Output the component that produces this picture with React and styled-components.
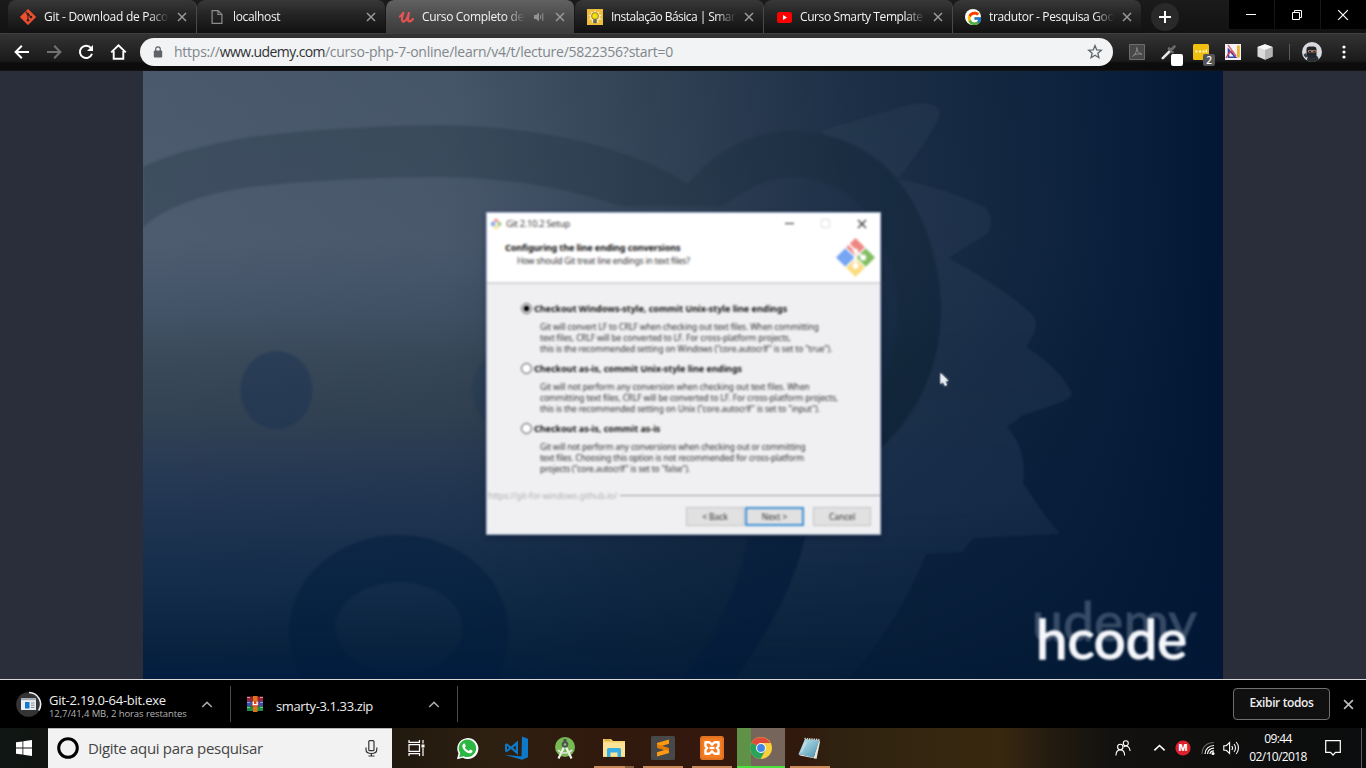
import React from 'react';
import styled, { createGlobalStyle, css } from 'styled-components';
import { FcGoogle } from 'react-icons/fc';

const GlobalStyle = createGlobalStyle`
  * { box-sizing: border-box; }
  html, body { margin: 0; padding: 0; background: #000; }
  body { overflow: hidden; font-family: "Open Sans", "Noto Sans", sans-serif; }
  svg { display: block; flex: none; }
`;

const Desktop = styled.div`
  width: 1366px;
  height: 768px;
  display: flex;
  flex-direction: column;
  overflow: hidden;
`;

/* ---------- tab strip ---------- */

const TabStrip = styled.header`
  height: 33px;
  display: flex;
  align-items: flex-start;
  padding-left: 8px;
  background: linear-gradient(#1b1b1b, #121212);
`;

const TabBox = styled.div`
  width: 189px;
  height: 33px;
  display: flex;
  align-items: center;
  padding: 1px 9px 0 12px;
  border-radius: 8px 8px 0 0;
  color: #f4f4f4;
  background: ${(p) =>
    p.$active
      ? 'linear-gradient(#616161, #4a4a4a 55%, #3b3b3b)'
      : 'linear-gradient(#383838, #242424 45%, #111)'};
  border-right: 1px solid ${(p) => (p.$divider ? '#4a4a4a' : 'transparent')};
  background-clip: padding-box;
`;

const TabIcon = styled.span`
  width: 16px;
  height: 16px;
  display: flex;
  align-items: center;
  justify-content: center;
`;

const TabTitle = styled.span`
  flex: 1;
  margin-left: 8px;
  overflow: hidden;
  white-space: nowrap;
  font-size: 12px;
  line-height: 18px;
  letter-spacing: ${(p) => p.$track || -0.34}px;
  -webkit-mask-image: linear-gradient(90deg, #000 calc(100% - 20px), transparent);
  mask-image: linear-gradient(90deg, #000 calc(100% - 20px), transparent);
`;

const TabClose = styled.span`
  width: 10px;
  margin-left: ${(p) => p.$gap || 8}px;
  color: #9a9a9a;
`;

const NewTab = styled.div`
  width: 28px;
  height: 28px;
  margin: 3px 0 0 9px;
  border-radius: 50%;
  background: #292929;
  display: flex;
  align-items: center;
  justify-content: center;
`;

const WindowControls = styled.div`
  margin-left: auto;
  display: flex;
  gap: 1px;
`;

const ControlButton = styled.div`
  width: 45px;
  height: 29px;
  padding-right: 1px;
  background: #000;
  display: flex;
  align-items: center;
  justify-content: center;
`;

/* ---------- toolbar ---------- */

const Toolbar = styled.nav`
  height: 38px;
  display: flex;
  align-items: center;
  padding: 0 14px 2px;
  border-top: 1px solid #3f3f3f;
  background: linear-gradient(#333, #1a1a1a 27px, #0c0c0c 29px, #0c0c0c 36px, #1b1b1b);
`;

const NavButtons = styled.div`
  display: flex;
  align-items: center;
  gap: 16px;
  width: 126px;
`;

const Omnibox = styled.div`
  width: 973px;
  height: 28px;
  border-radius: 14px;
  background: #f1f3f4;
  display: flex;
  align-items: center;
  padding: 0 10px 0 13px;
`;

const Url = styled.span`
  flex: 1;
  margin-left: 11px;
  white-space: nowrap;
  font-size: 14px;
  line-height: 20px;
  letter-spacing: -0.25px;
  color: #80868b;
`;

const UrlHost = styled.span`
  color: #303134;
  letter-spacing: -0.6px;
`;

const Extensions = styled.div`
  flex: 1;
  display: flex;
  align-items: center;
  gap: 16px;
  padding-left: 16px;
`;

const ExtensionSlot = styled.span`
  position: relative;
  width: 16px;
  height: 16px;
`;

const ExtensionBadge = styled.span`
  position: absolute;
  left: 10px;
  top: 10px;
  width: 12px;
  height: 12px;
  border-radius: 2px;
  background: ${(p) => p.$color};
  color: #fff;
  font: 600 10px/12px "Open Sans", sans-serif;
  text-align: center;
`;

const ToolbarDivider = styled.span`
  width: 1px;
  height: 16px;
  background: #5a5a5a;
`;

const ProfileArea = styled.span`
  display: flex;
  align-items: center;
  gap: 20px;
  margin-left: -4px;
`;

/* ---------- video page ---------- */

const Page = styled.main`
  height: 608px;
  display: flex;
  justify-content: center;
  background: #292e3a;
`;

const Video = styled.section`
  position: relative;
  width: 1080px;
  height: 608px;
  overflow: hidden;
  display: flex;
  justify-content: center;
  padding: 141px 0 0 1px;
  background:
    linear-gradient(90deg, rgba(2, 23, 52, 0) 0%, rgba(8, 28, 48, 0.06) 28%, rgba(8, 28, 48, 0.4) 48%, rgba(6, 27, 52, 0.68) 66%, rgba(3, 25, 53, 0.88) 88%, #011735 100%),
    linear-gradient(#4a596c, #4e5c70 28%, #435367 40%, #394959 48%, #334354 56%, #273a54 66%, #1d3350 75%, #122c4a 85%, #08223f 95%, #021d40);
`;

const VideoArt = styled.svg`
  position: absolute;
  inset: 0;
`;

const Wizard = styled.div`
  position: relative;
  width: 395px;
  height: 323px;
  display: flex;
  flex-direction: column;
  background: #f0eff1;
  border: 1px solid #aebbd6;
  color: #333;
  font-family: "Noto Sans", "Open Sans", sans-serif;
  filter: blur(0.8px);
  box-shadow: 0 2px 5px rgba(0, 10, 30, 0.4);
`;

const WizardTitleBar = styled.div`
  height: 21px;
  display: flex;
  align-items: center;
  padding: 0 13px 0 3px;
  background: #fff;
  font-size: 9.3px;
  letter-spacing: -0.3px;
  white-space: nowrap;
`;

const WizardTitle = styled.span`
  flex: 1;
  margin-left: 4px;
  color: #444;
`;

const WizardButtons = styled.span`
  display: flex;
  align-items: center;
  gap: 27px;
`;

const WizardHeader = styled.div`
  height: 50px;
  display: flex;
  justify-content: space-between;
  padding: 3px 4px 0 18px;
  background: #fff;
  border-bottom: 2px solid #d4d4d6;
  white-space: nowrap;
`;

const HeaderText = styled.div`
  padding-top: 4px;
`;

const HeaderTitle = styled.div`
  font-size: 9px;
  font-weight: 700;
  line-height: 13px;
  letter-spacing: -0.1px;
  color: #111;
`;

const HeaderSubtitle = styled.div`
  padding-left: 12px;
  font-size: 8.5px;
  line-height: 14px;
  letter-spacing: -0.2px;
`;

const OptionList = styled.div`
  flex: 1;
  padding: 17px 0 0 34px;
`;

const Option = styled.div`
  height: 60px;
`;

const OptionTitle = styled.div`
  height: 14px;
  display: flex;
  align-items: center;
  gap: 2px;
  font-size: 9px;
  font-weight: 700;
  letter-spacing: -0.01px;
  color: #111;
  white-space: nowrap;
`;

const Radio = styled.span`
  width: 11px;
  height: 11px;
  border-radius: 50%;
  border: 1px solid #444;
  background: ${(p) => (p.$on ? 'radial-gradient(#000 0 2.6px, #fff 3.4px)' : '#fff')};
`;

const OptionBody = styled.div`
  padding-top: 6px;
`;

const OptionLine = styled.div`
  padding-left: 19px;
  font-size: 8.4px;
  line-height: 11px;
  letter-spacing: ${(p) => p.$track}px;
  white-space: nowrap;
  color: #333;
`;

const WizardSite = styled.div`
  height: 12px;
  display: flex;
  align-items: center;
  gap: 3px;
  padding-left: 1px;
  font-size: 8.5px;
  letter-spacing: -0.12px;
  color: #b0b0b3;
  white-space: nowrap;
`;

const SiteRule = styled.span`
  flex: 1;
  height: 1px;
  background: #999;
`;

const WizardFooter = styled.div`
  height: 33px;
  display: flex;
  justify-content: flex-end;
  padding: 6px 9px 0 0;
`;

const WizardButton = styled.div`
  width: ${(p) => (p.$primary ? 59 : 58)}px;
  height: 19px;
  margin-left: ${(p) => p.$gap || 0}px;
  border: ${(p) => (p.$primary ? '2px solid #3f8fd3' : '1px solid #c3c3c5')};
  background: #e1e1e2;
  font-size: 8.6px;
  letter-spacing: -0.1px;
  line-height: ${(p) => (p.$primary ? 16 : 18)}px;
  text-align: center;
`;

/* ---------- downloads shelf ---------- */

const Shelf = styled.section`
  height: 49px;
  display: flex;
  align-items: center;
  background: #000;
  border-top: 1px solid #d8d8d8;
  color: #eee;
  white-space: nowrap;
`;

const DownloadItem = styled.div`
  width: ${(p) => p.$width}px;
  height: 36px;
  display: flex;
  align-items: center;
  padding: 0 17px 0 16px;
  border-right: 1px solid #4b4b4b;
`;

const DownloadText = styled.div`
  flex: 1;
  margin-left: ${(p) => p.$gap}px;
  padding-top: 4px;
`;

const DownloadName = styled.div`
  font-size: 13px;
  line-height: 15px;
  letter-spacing: ${(p) => p.$track}px;
`;

const DownloadStatus = styled.div`
  font-size: 9.5px;
  line-height: 12px;
  letter-spacing: -0.08px;
  color: #b4b4b4;
`;

const ShowAll = styled.div`
  margin-left: auto;
  width: 97px;
  height: 32px;
  border: 1px solid #6f6f6f;
  border-radius: 4px;
  background: #101010;
  font-size: 12px;
  font-weight: 600;
  line-height: 28px;
  letter-spacing: -0.38px;
  text-align: center;
`;

const ShelfClose = styled.div`
  width: 36px;
  display: flex;
  justify-content: center;
`;

/* ---------- taskbar ---------- */

const Taskbar = styled.footer`
  height: 40px;
  display: flex;
  background: linear-gradient(90deg, #0f1715 0, #11130f 48px, #21190f 392px, #2e2011 500px, #30190d 600px, #34180d 700px, #31190d 800px, #2f2310 840px, #38280f 1000px, #241b10 1050px, #12110f 1110px, #0b0c0d 1366px);
`;

const StartButton = styled.div`
  width: 48px;
  display: flex;
  align-items: center;
  justify-content: center;
`;

const SearchBox = styled.div`
  width: 344px;
  display: flex;
  align-items: center;
  padding: 0 14px 1px 8px;
  background: #f2f2f2;
  border-top: 1px solid #b5b5b5;
`;

const SearchHint = styled.span`
  flex: 1;
  margin-left: 8px;
  font-size: 15px;
  letter-spacing: -0.32px;
  color: #444;
  white-space: nowrap;
`;

const AppButton = styled.div`
  width: ${(p) => (p.$first ? 51 : 49)}px;
  display: flex;
  align-items: center;
  justify-content: center;
  padding-right: ${(p) => (p.$first ? 3 : 1)}px;
  ${(p) =>
    p.$running &&
    css`
      background: linear-gradient(#c98b57, #c98b57) 4px 38px / 40px 2px no-repeat;
    `}
  ${(p) =>
    p.$grouped &&
    css`
      background:
        linear-gradient(90deg, #c98b57 31px, #87603f 31px) 4px 38px / 40px 2px no-repeat;
    `}
  ${(p) =>
    p.$current &&
    css`
      background:
        linear-gradient(#4be23b, #4be23b) 0 38px / 48px 2px no-repeat,
        linear-gradient(90deg, #5f9147 14px, #75655a 14px) 0 0 / 48px 40px no-repeat;
    `}
`;

const Tray = styled.div`
  margin-left: auto;
  display: flex;
  align-items: center;
  color: #fff;
`;

const TrayIcon = styled.span`
  width: ${(p) => p.$width}px;
  padding-right: ${(p) => p.$inset || 0}px;
  display: flex;
  justify-content: center;
`;

const Clock = styled.div`
  width: 70px;
  font-size: 12px;
  line-height: 18px;
  text-align: center;
  letter-spacing: -0.62px;
`;

const DesktopEdge = styled.div`
  width: 5px;
  height: 40px;
  border-left: 1px solid #5e5e5e;
`;

/* ---------- icons ---------- */

const Cross = ({ size = 10, color = '#9a9a9a', width = 1.5 }) => (
  <svg width={size} height={size} viewBox="0 0 10 10" stroke={color} strokeWidth={width} fill="none">
    <path d="M1 1l8 8M9 1l-8 8" />
  </svg>
);

const GitIcon = () => (
  <svg width="16" height="16" viewBox="0 0 16 16">
    <path d="M8 .2L15.800 8 8 15.800.2 8z" fill="#f1502f" stroke="#f1502f" strokeWidth=".6" strokeLinejoin="round" />
    <path d="M5.600 2.600L8 5v6.200M8.200 5.400l2.700 2.700" stroke="#2a2220" strokeWidth="1.100" fill="none" />
    <circle cx="8" cy="5.300" r="1.300" fill="#2a2220" />
    <circle cx="8" cy="11.300" r="1.300" fill="#2a2220" />
    <circle cx="11" cy="8.100" r="1.300" fill="#2a2220" />
  </svg>
);

const FileIcon = () => (
  <svg width="12" height="14" viewBox="0 0 12 14" fill="none" stroke="#8c8c8c" strokeWidth="1.200">
    <path d="M1.100.600h6L10.900 4.400V13.400H1.100zM7 .8v3.700h3.800" />
  </svg>
);

const UdemyIcon = () => (
  <svg width="15" height="12" viewBox="0 0 15 12" fill="none" stroke="#ec5252" strokeLinecap="round">
    <path d="M.8 5.600C2.500 4.500 3.600 2.500 4.600 1.200 3.200 5 1.800 10.700 4.600 10.600 7.200 10.400 9 5.500 10.100 1.300 9 6 8.300 10.600 10.500 10.500 11.800 10.400 13 9.200 14 8" strokeWidth="2.100" />
  </svg>
);

const BulbIcon = () => (
  <svg width="16" height="16" viewBox="0 0 16 16">
    <path d="M0 0h16v16H0z" fill="#f0bd3a" />
    <path d="M8 .8l1.500 2.600 2.900-1.200-.6 3.100 3.200.8-2.500 2 2 2.500-3.200.2.300 3.200L8 12.500 4.800 14l.1-3.200-3.200-.4 2-2.400L1.200 6l3.200-.8-.8-3L6.500 3.400z" fill="#fbe9b0" />
    <circle cx="8" cy="7" r="3.400" fill="#f5df13" stroke="#7c6818" strokeWidth=".8" />
    <path d="M6.200 10.300h3.600v2.900l-1 1H7.200l-1-1z" fill="#66645c" />
  </svg>
);

const YoutubeIcon = () => (
  <svg width="15" height="11" viewBox="0 0 15 11">
    <rect width="15" height="11" rx="2.500" fill="#f00" />
    <path d="M6 3.100v4.800l4-2.400z" fill="#fff" />
  </svg>
);

const GoogleIcon = () => (
  <svg width="16" height="16" viewBox="0 0 16 16">
    <circle cx="8" cy="8" r="8" fill="#fff" />
    <FcGoogle x="1.500" y="1.500" width="13" height="13" />
  </svg>
);

const SpeakerSmall = () => (
  <svg width="10" height="10" viewBox="0 0 10 10">
    <path d="M0 3h2l3-2.500v9L2 7H0z" fill="#929292" />
    <path d="M6.700 3v4M8.800 1.200v7.600" stroke="#929292" fill="none" />
  </svg>
);

const ArrowIcon = ({ color = '#fff', flip }) => (
  <svg width="16" height="16" viewBox="0 0 16 16" fill="none" stroke={color} strokeWidth="2">
    <path d={flip ? 'M1 8h13M8.200 1.800L14.400 8l-6.200 6.200' : 'M15 8H2M7.800 1.800L1.600 8l6.200 6.200'} />
  </svg>
);

const ReloadIcon = () => (
  <svg width="16" height="16" viewBox="0 0 16 16">
    <path d="M13 4A6.200 6.200 0 1 0 14 9.800" fill="none" stroke="#fff" strokeWidth="2" />
    <path d="M15 1v6H9z" fill="#fff" />
  </svg>
);

const HomeIcon = () => (
  <svg width="17" height="16" viewBox="0 0 17 16" fill="none" stroke="#fff" strokeWidth="1.900">
    <path d="M1.200 8.400L8.500 1.300l7.300 7.100M3.700 7v7.800h9.600V7" />
  </svg>
);

const LockIcon = () => (
  <svg width="10" height="12" viewBox="0 0 10 12">
    <rect x=".8" y="4.500" width="8.400" height="7" rx="1" fill="#5f6368" />
    <path d="M2.700 5V3.200a2.300 2.300 0 0 1 4.600 0V5" fill="none" stroke="#5f6368" strokeWidth="1.200" />
  </svg>
);

const StarIcon = () => (
  <svg width="16" height="16" viewBox="0 0 16 16" fill="none" stroke="#5f6368" strokeWidth="1.300">
    <path d="M8 1.600l1.700 4.300 4.600.3-3.500 3 1.100 4.500L8 11.200l-3.900 2.500 1.100-4.500-3.500-3 4.600-.3z" />
  </svg>
);

const PdfIcon = () => (
  <svg width="16" height="16" viewBox="0 0 16 16" fill="none">
    <path d="M.5.500h15v15H.5z" fill="#484848" stroke="#6c6c6c" />
    <path d="M3.500 12.500c2.500-1.500 4.500-5 4.300-9M7.800 3.500c0 3 2 6.200 5 6.700M4 11.500c3-1.500 5.500-2 9-1.300" stroke="#8b8b8b" />
  </svg>
);

const PickerIcon = () => (
  <svg width="16" height="16" viewBox="0 0 16 16">
    <path d="M1.800 14.200L9 7" stroke="#e5e5e5" strokeWidth="2.600" strokeLinecap="round" />
    <path d="M8 4.500l3.500 3.500M10 6l3.500-3.500" stroke="#6a6a6a" strokeWidth="2.600" strokeLinecap="round" />
  </svg>
);

const DotsIcon = () => (
  <svg width="16" height="16" viewBox="0 0 16 16">
    <rect width="16" height="16" rx="1.500" fill="#f0c010" />
    <path d="M2.500 6.500h2v2h-2zM6 6.500h2v2H6zM9.500 6.500h2v2h-2zM12.600 5.500h1.400v3h-1.400z" fill="#fff7d3" />
  </svg>
);

const RulerIcon = () => (
  <svg width="16" height="16" viewBox="0 0 16 16">
    <path d="M0 0h16v16H0z" fill="#f5f2f7" />
    <path d="M3.500 5.500v7.700h7z" fill="none" stroke="#3846a6" strokeWidth="1.600" />
    <path d="M1 14l3-5c2-2 4-1.500 5 .5" fill="none" stroke="#d13b4b" strokeWidth="1.300" />
    <path d="M3 1l8 11" stroke="#d66070" strokeWidth="1.300" />
    <path d="M12 1.500h2.800v12H12z" fill="#eab42c" />
  </svg>
);

const CubeIcon = () => (
  <svg width="16" height="16" viewBox="0 0 16 16">
    <path d="M8 .3l7.500 2.700v9.600L8 15.800.5 12.600V3z" fill="#dadada" />
    <path d="M8 .3l7.500 2.700L8 6 .5 3z" fill="#f7f7f7" />
    <path d="M8 6l7.500-3v9.600L8 15.800z" fill="#b4b4b4" />
  </svg>
);

const NinjaIcon = () => (
  <svg width="20" height="20" viewBox="0 0 20 20">
    <circle cx="10" cy="10" r="10" fill="#d7d9dc" />
    <path d="M5 18.500c0-3 1-4.500 2-5h7c1.500.5 2.500 2 2.500 4A10 10 0 0 1 5 18.500z" fill="#2b3035" />
    <rect x="4.500" y="4.500" width="10" height="11" rx="3" fill="#20262c" />
    <path d="M6 8.200h8.500v2.200H6z" fill="#b98566" />
    <path d="M7 9h2v1H7zM11.500 9h2v1h-2z" fill="#222" />
    <path d="M1.500 13l2-2 2 3-1.500 2z" fill="#3a3f45" />
  </svg>
);

const KebabIcon = () => (
  <svg width="4" height="14" viewBox="0 0 4 14" fill="#fff">
    <circle cx="2" cy="2" r="1.600" />
    <circle cx="2" cy="7" r="1.600" />
    <circle cx="2" cy="12" r="1.600" />
  </svg>
);

const GitWindowsLogo = ({ size }) => (
  <svg width={size} height={size} viewBox="0 0 40 40">
    <path d="M20 1l9 9-9 9-9-9z" fill="#ee8783" />
    <path d="M10 11l9 9-9 9-9-9z" fill="#75a5f3" />
    <path d="M30 11l9 9-9 9-9-9z" fill="#82bd61" />
    <path d="M20 21l9 9-9 9-9-9z" fill="#fbdc80" />
    <path d="M12.500 6l7.500 7.500v14M20.500 14l7 6" stroke="#fff" strokeWidth="2" fill="none" />
    <circle cx="20" cy="28" r="3" fill="#fff" />
    <circle cx="27.500" cy="20" r="3" fill="#fff" />
    <circle cx="20" cy="13.500" r="2.400" fill="#fff" />
  </svg>
);

const InstallerIcon = () => (
  <svg width="26" height="26" viewBox="0 0 26 26">
    <circle cx="12.500" cy="13.500" r="12.300" fill="#343434" />
    <path d="M13 1.500a11.700 11.700 0 0 1 9.700 18" fill="none" stroke="#eee" strokeWidth="1.600" />
    <path d="M5 7h15v12H5z" fill="#e9edf0" />
    <path d="M5 7h15v2.200H5z" fill="#a5adb4" />
    <path d="M9 11h4.500v6.500H9z" fill="#1279cf" />
    <path d="M15 12h3.500M15 14.200h3.500M15 16.400h3.500" stroke="#878e94" strokeWidth="1" />
  </svg>
);

const ArchiveIcon = () => (
  <svg width="16" height="16" viewBox="0 0 16 16">
    <path d="M0 .5h16v4.700H0z" fill="#9a2436" />
    <path d="M0 5.300h16v4.900H0z" fill="#3c4fae" />
    <path d="M0 10.300h16V15H0z" fill="#1c8f45" />
    <path d="M0 1.500h3M0 6.300h3M0 11.300h3M13 1.500h3M13 6.300h3M13 11.300h3" stroke="#fff" strokeOpacity=".55" />
    <path d="M6 0h4.500v16H6z" fill="#e0721c" />
    <path d="M4.800 5.200h6.800v5.300H4.800z" fill="#cf4b24" />
    <path d="M6.300 5.500v3.200h3.800V5.500" fill="none" stroke="#fff" strokeWidth="1.300" />
  </svg>
);

const Caret = ({ size = 12, color = '#aaa' }) => (
  <svg width={size} height={size / 2 + 1} viewBox="0 0 12 7" fill="none" stroke={color} strokeWidth="1.500">
    <path d="M1.200 6L6 1.400 10.800 6" />
  </svg>
);

const WindowsIcon = () => (
  <svg width="16" height="16" viewBox="0 0 16 16" fill="#fff">
    <path d="M0 2.300l6.500-.9v6.200H0zM7.300 1.300L16 0v7.600H7.300zM0 8.400h6.500v6.200L0 13.700zM7.300 8.400H16V16l-8.700-1.300z" />
  </svg>
);

const CortanaIcon = () => (
  <svg width="24" height="24" viewBox="0 0 24 24">
    <circle cx="12" cy="12" r="9.300" fill="none" stroke="#000" strokeWidth="3" />
  </svg>
);

const MicIcon = () => (
  <svg width="13" height="17" viewBox="0 0 13 17" fill="none" stroke="#333" strokeWidth="1.200">
    <rect x="3.800" y=".7" width="5.200" height="10" rx="1" />
    <path d="M1 7.500v2c0 2.500 2 4 5.400 4s5.400-1.500 5.400-4v-2M6.400 13.500V16M3.500 16h6" />
  </svg>
);

const TaskViewIcon = () => (
  <svg width="17" height="16" viewBox="0 0 17 16" fill="none" stroke="#fff" strokeWidth="1.200">
    <path d="M1 4.600h10.500v6.800H1zM1 0v2.300h10.500V0M1 16v-2.300h10.500V16M15 0v3.500M15 8v8" />
    <path d="M13.500 4.500h3v3h-3z" fill="#fff" stroke="none" />
  </svg>
);

const WhatsappIcon = () => (
  <svg width="23" height="23" viewBox="0 0 24 24">
    <path d="M1 23.200l1.600-6A11 11 0 1 1 7 21.700z" fill="#fff" />
    <path d="M3.300 21l1.100-4.100A9.100 9.100 0 1 1 8 20z" fill="#2cb742" />
    <path d="M8.300 6.800c.4 0 .8-.1 1.100.7l.8 1.900c.1.500-.9 1.200-.9 1.600.8 1.800 2.300 2.900 3.900 3.500.5 0 1.200-1.500 1.700-1.400l2.200 1.100c.5.600-.2 2.500-1.800 2.800-3.500.6-8.400-3.600-8.700-7.300 0-1.200.8-2.800 1.700-2.900z" fill="#fff" />
  </svg>
);

const CodeIcon = () => (
  <svg width="24" height="24" viewBox="0 0 24 24" fill="#0f79c9">
    <path d="M18 .5l6 2.200v18.500L18 23.700.3 18.700 17.500 20.500z" />
    <path d="M14 4.500v14.500L7 13l-4.300 3.300L1 15.200V8.300l1.700-1L7 10.500zm-2.200 5L9 11.800l2.800 2.500zM3 9.800v3.900L5.100 11.800z" fillRule="evenodd" />
  </svg>
);

const StudioIcon = () => (
  <svg width="22" height="24" viewBox="0 0 22 24">
    <circle cx="11" cy="11" r="10" fill="#79b955" />
    <path d="M10.500 10L4.500 22.500M11.500 10l6 12.500" fill="none" stroke="#eef2ea" strokeWidth="2.200" />
    <path d="M4 14c3.500 4 10.500 4 14 0" fill="none" stroke="#dfe8d9" strokeWidth="1.600" />
    <path d="M9.500 3h3v4h-3z" fill="#49554d" />
    <circle cx="11" cy="8.500" r="3.300" fill="#49554d" />
    <circle cx="11" cy="8.500" r="1.300" fill="#8fbe77" />
  </svg>
);

const FolderIcon = () => (
  <svg width="22" height="20" viewBox="0 0 22 20">
    <path d="M0 1h8l2 2h12v16H0z" fill="#f7d36b" />
    <path d="M0 4.500h22V18H0z" fill="#fde396" />
    <path d="M1.500 1.500h6v1.200h-6z" fill="#c89c36" />
    <path d="M4 11.500q0-1.500 1.500-1.500h11q1.500 0 1.500 1.500V19h-3.500v-4.500h-7V19H4z" fill="#37aee4" />
  </svg>
);

const SublimeIcon = () => (
  <svg width="24" height="24" viewBox="0 0 24 24">
    <rect width="24" height="24" rx="1.500" fill="#484848" />
    <path d="M6 7l12-3.500v4.200L10.500 10 18 12.300V17L6 20.500v-4.200l7.500-2.200L6 11.800z" fill="#ff9a10" />
    <path d="M6 11.800V7.900L18 12.300V15z" fill="#e57c05" />
  </svg>
);

const XamppIcon = () => (
  <svg width="24" height="24" viewBox="0 0 24 24">
    <rect width="24" height="24" rx="3" fill="#f47b20" />
    <rect x="1" y="1" width="22" height="22" rx="2.500" fill="none" stroke="#cf6c28" />
    <path
      d="M5.500 6.300h3.300c1.500 0 1.800 1 3.200 2.500 1.400-1.500 1.700-2.500 3.200-2.500h3.300v3.900L16.800 12l1.700 1.800v3.900h-3.300c-1.500 0-1.800-1-3.200-2.500-1.400 1.500-1.700 2.500-3.200 2.500H5.500v-3.900L7.200 12l-1.700-1.800z"
      fill="none"
      stroke="#fff"
      strokeWidth="2.400"
      strokeLinejoin="round"
    />
    <path d="M9.500 12h5" stroke="#fff" strokeWidth="2.400" />
  </svg>
);

const ChromeIcon = () => (
  <svg width="22" height="22" viewBox="0 0 22 22">
    <circle cx="11" cy="11" r="11" fill="#f9cf3c" />
    <path d="M11 11L1.500 5.500A11 11 0 0 0 10.500 22L15.300 13.500z" fill="#28a35a" />
    <path d="M11 11L1.500 5.500A11 11 0 0 1 20.500 6H11z" fill="#df4a3b" />
    <circle cx="11" cy="11" r="5" fill="#f6f6f6" />
    <circle cx="11" cy="11" r="3.900" fill="#4285e8" />
  </svg>
);

const NotepadIcon = () => (
  <svg width="24" height="24" viewBox="0 0 24 24">
    <defs>
      <linearGradient id="sheet" x1="0" y1="0" x2="1" y2="1">
        <stop offset="0" stopColor="#c8ebf2" />
        <stop offset="1" stopColor="#438fae" />
      </linearGradient>
    </defs>
    <path d="M21 4l1 2-3.500 17-3-1z" fill="#e8e6de" />
    <path d="M7 3l14.500 1L15.500 21.500 .5 18z" fill="url(#sheet)" />
    <path d="M.5 18l15 3.500 2 1L2 19.500z" fill="#f1f4f4" />
    <path d="M6.500 2.500l15 1.200" stroke="#d7d3c8" strokeWidth="1.600" strokeDasharray="1.300 1" />
    <path d="M8 6L3 16.500" stroke="#fff" strokeOpacity=".3" strokeWidth="2" />
  </svg>
);

const PeopleIcon = () => (
  <svg width="16" height="16" viewBox="0 0 16 16" fill="none" stroke="#fff" strokeWidth="1.100">
    <circle cx="5.300" cy="7" r="2.700" />
    <path d="M1 15.500c0-7.500 8.600-7.500 8.600 0" />
    <circle cx="10.800" cy="3.200" r="2.500" />
    <path d="M8.800 6.800c2.500-2 6 0 6.300 4.200" />
  </svg>
);

const MegaIcon = () => (
  <svg width="16" height="16" viewBox="0 0 16 16">
    <circle cx="8" cy="8" r="7.600" fill="#df1f2d" />
    <text x="8" y="11.400" textAnchor="middle" fontFamily="Inter, sans-serif" fontWeight="800" fontSize="9.500" fill="#fff">M</text>
  </svg>
);

const WifiIcon = () => (
  <svg width="14" height="14" viewBox="0 0 14 14" fill="none" strokeWidth="1.200">
    <path d="M1 13C1 6 6 1.500 13 1.500" stroke="#666" />
    <path d="M4 13c0-5 4-8.500 9-8.500M6.500 13c0-3.500 3-5.800 6.500-5.800M9 13c0-2 2-3.200 4-3.200" stroke="#fff" />
    <circle cx="12" cy="12.500" r="1.500" fill="#fff" />
  </svg>
);

const VolumeIcon = () => (
  <svg width="17" height="14" viewBox="0 0 17 14" fill="none" stroke="#fff" strokeWidth="1.100">
    <path d="M.8 4.700h2.500L6.600 1.500v11L3.300 9.300H.8zM8.800 5c1 1.200 1 2.800 0 4M11 3c2 2.200 2 5.800 0 8M13.200 1c3 3.300 3 8.700 0 12" />
  </svg>
);

const NotificationIcon = () => (
  <svg width="16" height="16" viewBox="0 0 16 16" fill="none" stroke="#fff" strokeWidth="1.200">
    <path d="M.7.700h14.600v11.600H10.500L8 15l-2.500-2.700H.7z" />
  </svg>
);

/* ---------- video artwork ---------- */

const Wallpaper = () => (
  <VideoArt width="1080" height="608" viewBox="143 71 1080 608">
    <defs>
      <filter id="soft" colorInterpolationFilters="sRGB"><feGaussianBlur stdDeviation="0.9" /></filter>
      <linearGradient id="fadeDown" gradientUnits="userSpaceOnUse" x1="0" y1="71" x2="0" y2="679">
        <stop offset="0" stopColor="#3d4f62" stopOpacity=".22" />
        <stop offset=".7" stopColor="#34496a" stopOpacity=".28" />
        <stop offset="1" stopColor="#2c4a68" stopOpacity="0.05" />
      </linearGradient>
    </defs>
    <g filter="url(#soft)">
      <path
        fill="url(#fadeDown)"
        d="M823 130L909 105Q936 99 940 113Q938 128 898 179Q945 188 985 207Q996 220 987 234L948 258Q1000 285 1034 316Q1040 328 1026 347Q1060 368 1072 394Q1072 401 1023 415L1007 427Q1027 448 1023 483Q1040 510 1060 534L973 538L962 552L926 554Q895 630 848 679H735Q790 600 805 538L881 448Q944 385 941 304Q935 230 898 179Q870 145 823 134z"
      />
      <g fill="#122434" fillOpacity=".24">
        <path d="M143 167Q180 149 250 137Q340 126 445 125Q600 129 688 184Q730 132 792 131Q860 133 905 190Q941 240 941 304Q940 400 881 448V394Q900 340 898 304Q896 270 884 246Q860 178 791 177Q755 180 723 206H620Q540 178 440 177Q340 177 250 187Q175 198 143 227z" />
        <ellipse cx="276.500" cy="390" rx="36" ry="39" fill="#152c52" fillOpacity=".4" />
        <ellipse cx="508" cy="390" rx="36" ry="39" fill="#152c52" />
        <path fill="#001b3c" fillOpacity=".45" fillRule="evenodd" d="M289 632a109.500 97 0 1 1 219 0a109.500 97 0 1 1-219 0zM335 628a64 46 0 1 0 128 0a64 46 0 1 0-128 0z" />
        <path d="M748 538Q735 610 684 679H735Q790 605 805 538z" fill="#001b3c" fillOpacity=".35" />
      </g>
    </g>
    <g filter="url(#soft)" fontFamily="Lato, sans-serif">
      <text x="1032" y="641" fontSize="54" textLength="165" lengthAdjust="spacingAndGlyphs" fill="#62748c" stroke="#62748c" strokeWidth="1" opacity=".55">udemy</text>
      <text x="1036" y="659" fontSize="54" textLength="151" lengthAdjust="spacingAndGlyphs" fill="#f5f7fb" stroke="#f5f7fb" strokeWidth="1.400">hcode</text>
    </g>
    <path d="M940.500 373v11l2.500-2 2 4 2-1-1.800-3.800 3.300-.3z" fill="#fff" stroke="#777f8c" strokeWidth=".5" filter="url(#soft)" />
    <path d="M940.500 373v11l2.500-2 2 4 2-1-1.800-3.800 3.300-.3z" fill="#e8ecf2" fillOpacity=".8" />
  </VideoArt>
);

/* ---------- content ---------- */

const tabs = [
  { title: 'Git - Download de Paco', icon: <GitIcon />, divider: true, track: -0.28 },
  { title: 'localhost', icon: <FileIcon /> },
  { title: 'Curso Completo de', icon: <UdemyIcon />, active: true, audio: true },
  { title: 'Instalação Básica | Smar', icon: <BulbIcon />, divider: true, track: -0.55 },
  { title: 'Curso Smarty Template', icon: <YoutubeIcon />, divider: true, track: -0.4 },
  { title: 'tradutor - Pesquisa Goo', icon: <GoogleIcon /> },
];

const options = [
  {
    title: 'Checkout Windows-style, commit Unix-style line endings',
    on: true,
    track: -0.12,
    lines: [
      'Git will convert LF to CRLF when checking out text files. When committing',
      'text files, CRLF will be converted to LF. For cross-platform projects,',
      'this is the recommended setting on Windows ("core.autocrlf" is set to "true").',
    ],
  },
  {
    title: 'Checkout as-is, commit Unix-style line endings',
    track: -0.11,
    lines: [
      'Git will not perform any conversion when checking out text files. When',
      'committing text files, CRLF will be converted to LF. For cross-platform projects,',
      'this is the recommended setting on Unix ("core.autocrlf" is set to "input").',
    ],
  },
  {
    title: 'Checkout as-is, commit as-is',
    track: -0.17,
    lines: [
      'Git will not perform any conversions when checking out or committing',
      'text files. Choosing this option is not recommended for cross-platform',
      'projects ("core.autocrlf" is set to "false").',
    ],
  },
];

const SetupWizard = () => (
  <Wizard>
    <WizardTitleBar>
      <GitWindowsLogo size={12} />
      <WizardTitle>Git 2.10.2 Setup</WizardTitle>
      <WizardButtons>
        <svg width="9" height="9" viewBox="0 0 9 9"><path d="M0 4.500h9" stroke="#444" strokeWidth="1.200" /></svg>
        <svg width="9" height="9" viewBox="0 0 9 9"><path d="M.5.500h8v8h-8z" stroke="#ddd" fill="none" /></svg>
        <Cross size={10} color="#333" width={1.2} />
      </WizardButtons>
    </WizardTitleBar>
    <WizardHeader>
      <HeaderText>
        <HeaderTitle>Configuring the line ending conversions</HeaderTitle>
        <HeaderSubtitle>How should Git treat line endings in text files?</HeaderSubtitle>
      </HeaderText>
      <GitWindowsLogo size={41} />
    </WizardHeader>
    <OptionList>
      {options.map((o) => (
        <Option key={o.title}>
          <OptionTitle>
            <Radio $on={o.on} />
            {o.title}
          </OptionTitle>
          <OptionBody>
            {o.lines.map((line) => (
              <OptionLine key={line} $track={o.track}>{line}</OptionLine>
            ))}
          </OptionBody>
        </Option>
      ))}
    </OptionList>
    <WizardSite>
      https://git-for-windows.github.io/
      <SiteRule />
    </WizardSite>
    <WizardFooter>
      <WizardButton>&lt; Back</WizardButton>
      <WizardButton $primary $gap={1}>Next &gt;</WizardButton>
      <WizardButton $gap={9}>Cancel</WizardButton>
    </WizardFooter>
  </Wizard>
);

const Tab = ({ title, icon, active, audio, divider, track }) => (
  <TabBox $active={active} $divider={divider}>
    <TabIcon>{icon}</TabIcon>
    <TabTitle $track={track}>{title}</TabTitle>
    {audio && <TabClose $gap={9}><SpeakerSmall /></TabClose>}
    <TabClose $gap={audio ? 11 : 8}><Cross /></TabClose>
  </TabBox>
);

export default function App() {
  return (
    <Desktop>
      <GlobalStyle />
      <TabStrip>
        {tabs.map((t) => <Tab key={t.title} {...t} />)}
        <NewTab>
          <svg width="12" height="12" viewBox="0 0 12 12"><path d="M6 0v12M0 6h12" stroke="#fff" strokeWidth="2" /></svg>
        </NewTab>
        <WindowControls>
          <ControlButton>
            <svg width="10" height="10" viewBox="0 0 10 10"><path d="M0 4.500h10" stroke="#fff" /></svg>
          </ControlButton>
          <ControlButton>
            <svg width="10" height="10" viewBox="0 0 10 10" fill="none" stroke="#fff"><path d="M.5 2.500h7v7h-7zM2.500 2.500v-2h7v7h-2" /></svg>
          </ControlButton>
          <ControlButton><Cross color="#fff" width={1} size={12} /></ControlButton>
        </WindowControls>
      </TabStrip>

      <Toolbar>
        <NavButtons>
          <ArrowIcon />
          <ArrowIcon flip color="#727272" />
          <ReloadIcon />
          <HomeIcon />
        </NavButtons>
        <Omnibox>
          <LockIcon />
          <Url>
            https://<UrlHost>www.udemy.com</UrlHost>/curso-php-7-online/learn/v4/t/lecture/5822356?start=0
          </Url>
          <StarIcon />
        </Omnibox>
        <Extensions>
          <ExtensionSlot><PdfIcon /></ExtensionSlot>
          <ExtensionSlot><PickerIcon /><ExtensionBadge $color="#fff" /></ExtensionSlot>
          <ExtensionSlot><DotsIcon /><ExtensionBadge $color="#555">2</ExtensionBadge></ExtensionSlot>
          <ExtensionSlot><RulerIcon /></ExtensionSlot>
          <ExtensionSlot><CubeIcon /></ExtensionSlot>
          <ToolbarDivider />
          <ProfileArea>
            <NinjaIcon />
            <KebabIcon />
          </ProfileArea>
        </Extensions>
      </Toolbar>

      <Page>
        <Video>
          <Wallpaper />
          <SetupWizard />
        </Video>
      </Page>

      <Shelf>
        <DownloadItem $width={231}>
          <InstallerIcon />
          <DownloadText $gap={7}>
            <DownloadName $track={-0.25}>Git-2.19.0-64-bit.exe</DownloadName>
            <DownloadStatus>12,7/41,4 MB, 2 horas restantes</DownloadStatus>
          </DownloadText>
          <Caret />
        </DownloadItem>
        <DownloadItem $width={227}>
          <ArchiveIcon />
          <DownloadText $gap={13}>
            <DownloadName $track={-0.38}>smarty-3.1.33.zip</DownloadName>
          </DownloadText>
          <Caret />
        </DownloadItem>
        <ShowAll>Exibir todos</ShowAll>
        <ShelfClose><Cross size={11} color="#bbb" /></ShelfClose>
      </Shelf>

      <Taskbar>
        <StartButton><WindowsIcon /></StartButton>
        <SearchBox>
          <CortanaIcon />
          <SearchHint>Digite aqui para pesquisar</SearchHint>
          <MicIcon />
        </SearchBox>
        <AppButton $first><TaskViewIcon /></AppButton>
        <AppButton><WhatsappIcon /></AppButton>
        <AppButton><CodeIcon /></AppButton>
        <AppButton><StudioIcon /></AppButton>
        <AppButton $grouped><FolderIcon /></AppButton>
        <AppButton $running><SublimeIcon /></AppButton>
        <AppButton $running><XamppIcon /></AppButton>
        <AppButton $current><ChromeIcon /></AppButton>
        <AppButton $running><NotepadIcon /></AppButton>
        <Tray>
          <TrayIcon $width={52}><PeopleIcon /></TrayIcon>
          <TrayIcon $width={20}><Caret size={13} color="#fff" /></TrayIcon>
          <TrayIcon $width={28}><MegaIcon /></TrayIcon>
          <TrayIcon $width={22}><WifiIcon /></TrayIcon>
          <TrayIcon $width={24}><VolumeIcon /></TrayIcon>
          <Clock>09:44<br />02/10/2018</Clock>
          <TrayIcon $width={48} $inset={8}><NotificationIcon /></TrayIcon>
          <DesktopEdge />
        </Tray>
      </Taskbar>
    </Desktop>
  );
}
